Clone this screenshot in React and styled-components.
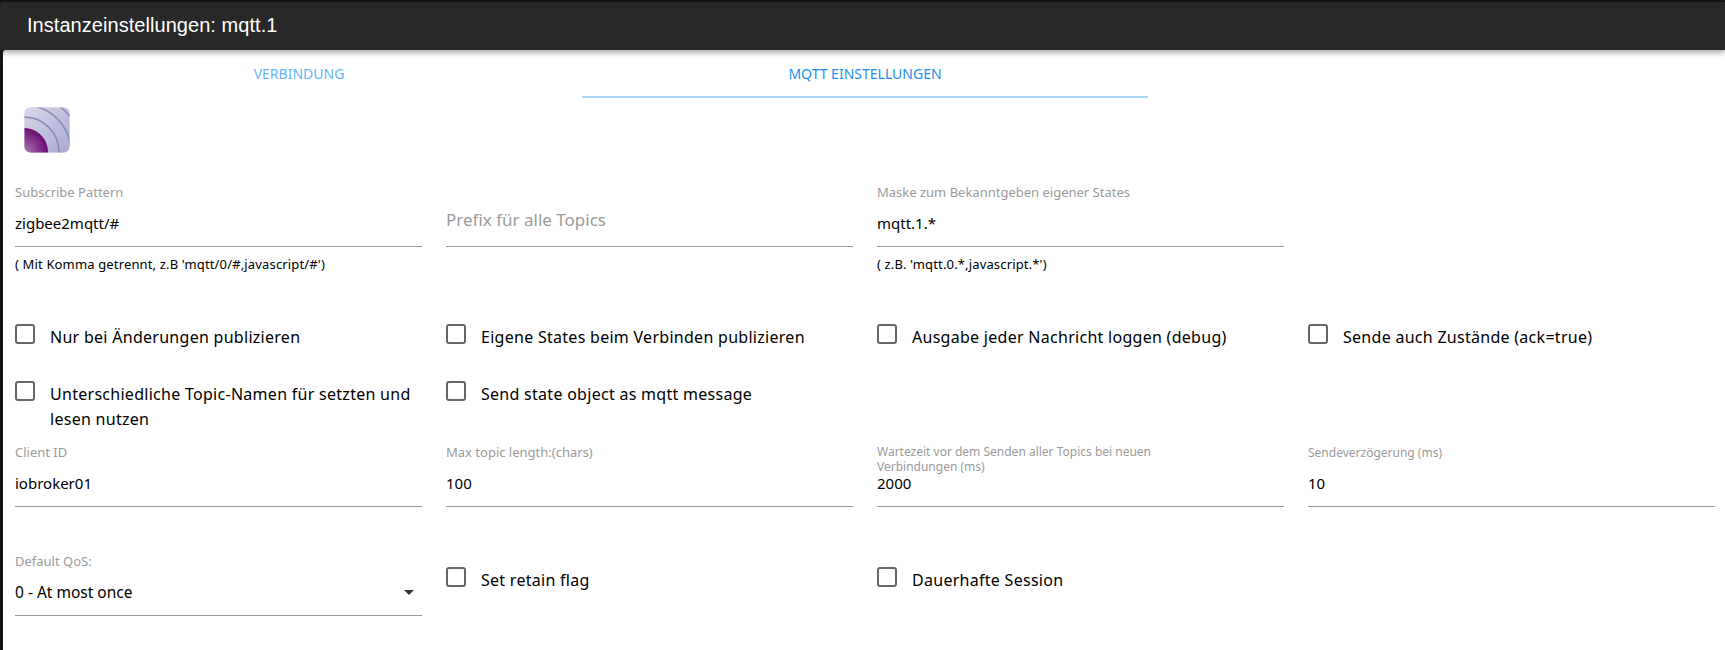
import React from "react";
import styled, { createGlobalStyle } from "styled-components";

const Global = createGlobalStyle`
  html, body { margin: 0; padding: 0; height: 100%; background: #141414; overflow: hidden; }
  #root { height: 650px; }
`;
const Frame = styled.div`
  height: 650px; padding-top: 2px; box-sizing: border-box; display: flex; flex-direction: column;
  font-family: "Noto Sans", sans-serif; color: #000;
`;
const TitleBar = styled.header`
  height: 48px; flex: none; background: #282828; color: #fff; display: flex; align-items: center;
  padding-left: 27px; padding-bottom: 2px; box-sizing: border-box; font: 20px "Liberation Sans", sans-serif;
  letter-spacing: .05px; border-radius: 3px 0 0 0; position: relative; z-index: 1; box-shadow: 0 2px 6px rgba(0,0,0,.4);
`;
const Panel = styled.main`
  flex: 1; margin-left: 3px; background: #fff; padding: 0 0 0 12px; border-radius: 3px 0 0 0;
`;
const Tabs = styled.nav` display: flex; height: 48px; margin-left: 1px; `;
const Tab = styled.div`
  width: 566px; height: 48px; box-sizing: border-box; display: flex; align-items: center; justify-content: center;
  font-size: 14px; text-transform: uppercase; padding-top: 1px;
  color: ${p => (p.$active ? "#1e90f0" : "#64b5f6")};
  border-bottom: 2px solid ${p => (p.$active ? "#a8d6f7" : "transparent")};
`;
const Logo = styled.svg` display: block; width: 48px; height: 48px; margin: 8px 0 0 8px; `;
const Grid = styled.div`
  display: grid; grid-template-columns: repeat(4, 407px); column-gap: 24px;
`;
const Field = styled.div`
  display: flex; flex-direction: column; justify-content: flex-end; height: ${p => p.$h}px;
`;
const Label = styled.label`
  font-size: ${p => p.$fs ?? 13}px; line-height: 15px; color: #9b9b9b; margin-bottom: ${p => p.$mb ?? 12}px;
  max-width: ${p => p.$mw ?? "none"};
`;
const Value = styled.div`
  font-size: 15px; line-height: 22px; height: 35px; box-sizing: border-box;
  border-bottom: 1px solid #999;
`;
const Placeholder = styled(Value)`
  font-size: 17px; line-height: 16px; color: #9b9b9b;
`;
const SelectValue = styled(Value)`
  font-size: 15.5px; display: flex; justify-content: space-between; align-items: flex-start;
`;
const Arrow = styled.span`
  width: 0; height: 0; border-left: 5px solid transparent; border-right: 5px solid transparent;
  border-top: 5px solid #333; margin: 9px 8px 0 0;
`;
const Hint = styled.div`
  font-size: 13px; letter-spacing: .15px; line-height: 16px; margin-top: 9px; height: 16px;
`;
const Check = styled.div`
  display: flex; gap: 15px; font-size: 16px; letter-spacing: .28px; line-height: 25px;
  height: ${p => p.$h}px; padding-top: ${p => p.$pt ?? 0}px; box-sizing: border-box; align-items: flex-start;
`;
const Box = styled.span`
  flex: none; width: 20px; height: 20px; box-sizing: border-box; border: 2px solid #666; border-radius: 3px;
`;
const CheckText = styled.span` padding-top: 1px; `;
const Spacer = styled.div` height: ${p => p.$h}px; `;

const C = ({ h, pt, children }) => <Check $h={h} $pt={pt}><Box /><CheckText>{children}</CheckText></Check>;

export default function App() {
  return (
    <Frame>
      <Global />
      <TitleBar>Instanzeinstellungen: mqtt.1</TitleBar>
      <Panel>
        <Tabs>
          <Tab>Verbindung</Tab>
          <Tab $active>MQTT Einstellungen</Tab>
        </Tabs>
        <Logo viewBox="0 0 48 48">
          <defs>
            <linearGradient id="bg" x1="0" y1="0" x2="1" y2="1">
              <stop offset="0" stopColor="#d8d8ec" />
              <stop offset="1" stopColor="#a8a8ce" />
            </linearGradient>
            <radialGradient id="pu" gradientUnits="userSpaceOnUse" cx="1" cy="46" r="24">
              <stop offset="0" stopColor="#b07ab4" />
              <stop offset="1" stopColor="#680c70" />
            </radialGradient>
            <clipPath id="cl"><rect x="1.5" y="1.5" width="45" height="45" rx="6" /></clipPath>
          </defs>
          <rect x="1" y="1" width="46" height="46" rx="6.5" fill="#f3e9f7" />
          <g clipPath="url(#cl)">
            <rect width="48" height="48" fill="url(#bg)" />
            <circle cx="1" cy="46" r="24" fill="url(#pu)" />
            <circle cx="1" cy="46" r="35" fill="none" stroke="#8888b8" strokeWidth="1.5" />
            <circle cx="1" cy="46" r="47" fill="none" stroke="#8888b8" strokeWidth="1.5" />
            <circle cx="1" cy="46" r="58" fill="none" stroke="#8888b8" strokeWidth="1.5" />
          </g>
        </Logo>
        <Grid>
          <Field $h={93}><Label>Subscribe Pattern</Label><Value>zigbee2mqtt/#</Value></Field>
          <Field $h={93}><Placeholder>Prefix für alle Topics</Placeholder></Field>
          <Field $h={93}><Label>Maske zum Bekanntgeben eigener States</Label><Value>mqtt.1.*</Value></Field>
          <div />
          <Hint>( Mit Komma getrennt, z.B 'mqtt/0/#,javascript/#')</Hint>
          <div />
          <Hint>( z.B. 'mqtt.0.*,javascript.*')</Hint>
          <div />
        </Grid>
        <Spacer $h={52} />
        <Grid>
          <C h={57}>Nur bei Änderungen publizieren</C>
          <C h={57}>Eigene States beim Verbinden publizieren</C>
          <C h={57}>Ausgabe jeder Nachricht loggen (debug)</C>
          <C h={57}>Sende auch Zustände (ack=true)</C>
          <C h={50}>Unterschiedliche Topic-Namen für setzten und lesen nutzen</C>
          <C h={50}>Send state object as mqtt message</C>
          <div />
          <div />
        </Grid>
        <Grid>
          <Field $h={76}><Label>Client ID</Label><Value>iobroker01</Value></Field>
          <Field $h={76}><Label>Max topic length:(chars)</Label><Value>100</Value></Field>
          <Field $h={76}><Label $mb={-2} $fs={12} $mw="300px">Wartezeit vor dem Senden aller Topics bei neuen Verbindungen (ms)</Label><Value>2000</Value></Field>
          <Field $h={76}><Label $fs={12}>Sendeverzögerung (ms)</Label><Value>10</Value></Field>
        </Grid>
        <Spacer $h={32} />
        <Grid>
          <Field $h={77}><Label>Default QoS:</Label><SelectValue>0 - At most once<Arrow /></SelectValue></Field>
          <C h={77} pt={28}>Set retain flag</C>
          <C h={77} pt={28}>Dauerhafte Session</C>
          <div />
        </Grid>
      </Panel>
    </Frame>
  );
}
